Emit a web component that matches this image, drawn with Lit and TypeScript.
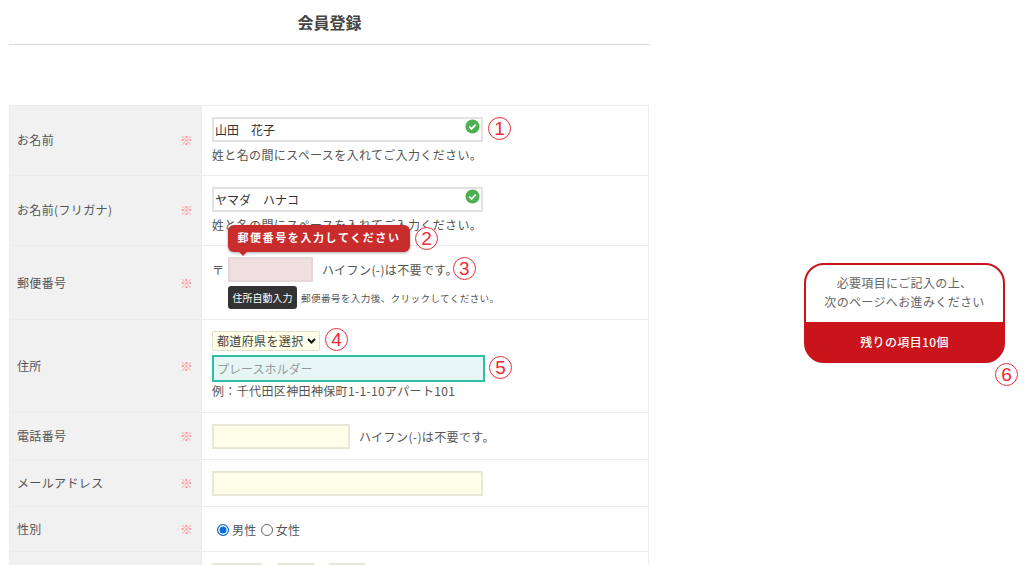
import { LitElement, html, css } from "lit";
import { customElement } from "lit/decorators.js";

@customElement("app-root")
export class AppRoot extends LitElement {
  static styles = css`
    :host { display: block; width: 1024px; height: 565px; overflow: hidden; background: #fff; color: #555;
      font-family: "Noto Sans CJK JP", "Noto Sans", sans-serif; font-size: 12px; line-height: 18px; letter-spacing: .03em; }
    * { box-sizing: border-box; }
    .page { display: flex; align-items: flex-start; padding-left: 9px; }
    .main { width: 641px; flex: none; }
    h1 { margin: 0; height: 45px; border-bottom: 1px solid #d9d9d9; font-size: 16px; line-height: 45px; font-weight: 700; color: #444; text-align: center; letter-spacing: 0; }
    .table { margin-top: 60px; width: 640px; border: 1px solid #ececec; border-bottom: 0; }
    .row { display: flex; border-bottom: 1px solid #ececec; }
    .th { flex: none; width: 192px; background: #f1f1f1; border-right: 1px solid #ececec; display: flex; align-items: center; justify-content: space-between; padding: 0 8px 0 7px; color: #555; }
    .up { padding-bottom: 2px; }
    .req { color: #ff8f8f; font-size: 13px; letter-spacing: 0; }
    .td { flex: 1; padding: 11px 10px 0; position: relative; min-width: 0; }
    .line { display: flex; align-items: center; }
    .input { display: block; height: 25px; border: 2px solid #e2e2e2; background: #fffee8; padding: 0 2px 0 1px; line-height: 21px; color: #333; position: relative; flex: none; letter-spacing: 0; }
    .yellow { border-color: #e8e8d8; }
    .wide { width: 271px; }
    .filled { background: #fff; }
    .hint { margin-top: 4px; height: 18px; }
    .check { position: absolute; right: 1px; top: 0px; width: 15px; height: 15px; }
    .num { flex: none; width: 23px; height: 23px; border: 1px solid #ee2b36; border-radius: 50%; background: #fff; color: #ee2b36; font-family: "Liberation Sans", sans-serif; font-size: 19px; line-height: 21px; text-align: center; letter-spacing: 0; margin-top: -2px; }
    .n1 { margin-left: 5px; }
    .n3 { margin-left: -5px; }
    .n4 { margin-left: 5px; margin-top: -3px; }
    .n5 { margin-left: 4px; }
    .r1 { height: 70px; }
    .r2 { height: 70px; }
    .r3 { height: 74px; }
    .r4 { height: 93px; }
    .r5, .r6 { height: 47px; }
    .r7 { height: 45px; }
    .r8 { height: 60px; }
    .zip-mark { width: 16px; flex: none; }
    .zip { width: 85px; background: #efdfdf; border-color: #e6d8d8; }
    .after { margin-left: 9px; white-space: nowrap; }
    .pad { padding-left: 16px; margin-top: 4px; }
    .btn { flex: none; width: 69px; height: 23px; border-radius: 3px; background: #333; color: #fff; font-size: 10px; line-height: 23px; text-align: center; letter-spacing: 0; }
    .small { margin-left: 4px; font-size: 9.6px; white-space: nowrap; }
    .tip { position: absolute; left: 26px; top: -21px; width: 182px; height: 27px; border-radius: 6px; background: #c92c2c; box-shadow: 0 1px 3px rgba(0,0,0,.35); color: #fff; font-size: 11px; font-weight: 700; letter-spacing: 1.6px; line-height: 25px; text-align: center; white-space: nowrap; z-index: 2; }
    .tip::after { content: ""; position: absolute; left: 10px; bottom: -4px; border: 5px solid transparent; border-bottom: 0; border-top-color: #c92c2c; }
    .tipnum { position: absolute; left: 213px; top: -19px; margin: 0; z-index: 3; }
    .selline { height: 20px; }
    .select { flex: none; width: 108px; height: 20px; border: 1px solid #e2e2d0; border-radius: 2px; background: #fffee8; color: #444; display: flex; align-items: center; justify-content: space-between; padding: 0 3px 0 4px; }
    .addr { width: 273px; height: 27px; border-color: #2fbfa8; background: #e5f6f4; color: #999; padding-left: 3px; line-height: 23px; }
    .addrline { margin-top: 4px; }
    .tel { width: 138px; }
    .radios { display: flex; align-items: center; height: 18px; margin-top: 3px; padding-left: 5px; }
    .radio { width: 12px; height: 12px; border-radius: 50%; border: 1px solid #666; margin-right: 3px; flex: none; background: #fff; }
    .radio.on { border: 1.5px solid #0a6ce0; box-shadow: inset 0 0 0 1.5px #fff; background: #0a6ce0; }
    .gap { margin-right: 4px; }
    .dates { display: flex; }
    .d1 { width: 50px; }
    .d2 { width: 36px; margin-left: 16px; }
    .d3 { width: 36px; margin-left: 15px; }
    .side { flex: none; margin: 263px 0 0 154px; width: 201px; position: relative; }
    .card { border: 2px solid #c8141a; border-radius: 20px; overflow: hidden; background: #c8141a; height: 100px; }
    .card-top { background: #fff; height: 57px; padding-top: 8px; line-height: 19px; text-align: center; color: #666; }
    .card-bottom { height: 41px; line-height: 38px; margin-top: 1px; text-align: center; color: #fff; font-weight: 500; }
    .six { position: absolute; left: 191px; top: 100px; margin: 0; }
  `;

  private check() {
    return html`<svg class="check" viewBox="0 0 16 16"><circle cx="8" cy="8" r="7.5" fill="#4caf50"/><path d="M4.6 8.2l2.4 2.4 4.4-4.6" fill="none" stroke="#fff" stroke-width="2"/></svg>`;
  }
  private th(label: string, up = false) {
    return html`<div class="th ${up ? "up" : ""}"><span>${label}</span><span class="req">※</span></div>`;
  }

  render() {
    return html`<div class="page">
      <div class="main">
        <h1>会員登録</h1>
        <div class="table">
          <div class="row r1">${this.th("お名前", true)}
            <div class="td">
              <div class="line"><div class="input wide filled">山田　花子${this.check()}</div><div class="num n1">1</div></div>
              <div class="hint">姓と名の間にスペースを入れてご入力ください。</div>
            </div>
          </div>
          <div class="row r2">${this.th("お名前(フリガナ)", true)}
            <div class="td">
              <div class="line"><div class="input wide filled">ヤマダ　ハナコ${this.check()}</div></div>
              <div class="hint">姓と名の間にスペースを入れてご入力ください。</div>
            </div>
          </div>
          <div class="row r3">${this.th("郵便番号")}
            <div class="td">
              <div class="tip">郵便番号を入力してください</div>
              <div class="num tipnum">2</div>
              <div class="line"><span class="zip-mark">〒</span><div class="input zip"></div><span class="after">ハイフン(-)は不要です。</span><div class="num n3">3</div></div>
              <div class="line pad"><div class="btn">住所自動入力</div><span class="small">郵便番号を入力後、クリックしてください。</span></div>
            </div>
          </div>
          <div class="row r4">${this.th("住所")}
            <div class="td">
              <div class="line selline"><div class="select"><span>都道府県を選択</span><svg width="9" height="6" viewBox="0 0 9 6"><path d="M1 1l3.5 3.5L8 1" fill="none" stroke="#111" stroke-width="2"/></svg></div><div class="num n4">4</div></div>
              <div class="line addrline"><div class="input addr">プレースホルダー</div><div class="num n5">5</div></div>
              <div>例：千代田区神田神保町1-1-10アパート101</div>
            </div>
          </div>
          <div class="row r5">${this.th("電話番号")}
            <div class="td"><div class="line"><div class="input tel yellow"></div><span class="after">ハイフン(-)は不要です。</span></div></div>
          </div>
          <div class="row r6">${this.th("メールアドレス")}
            <div class="td"><div class="line"><div class="input wide yellow"></div></div></div>
          </div>
          <div class="row r7">${this.th("性別")}
            <div class="td"><div class="radios"><span class="radio on"></span><span class="gap">男性</span><span class="radio"></span><span>女性</span></div></div>
          </div>
          <div class="row r8"><div class="th"></div>
            <div class="td"><div class="dates"><div class="input d1 yellow"></div><div class="input d2 yellow"></div><div class="input d3 yellow"></div></div></div>
          </div>
        </div>
      </div>
      <aside class="side">
        <div class="card">
          <div class="card-top">必要項目にご記入の上、<br />次のページへお進みください</div>
          <div class="card-bottom">残りの項目10個</div>
        </div>
        <div class="num six">6</div>
      </aside>
    </div>`;
  }
}
